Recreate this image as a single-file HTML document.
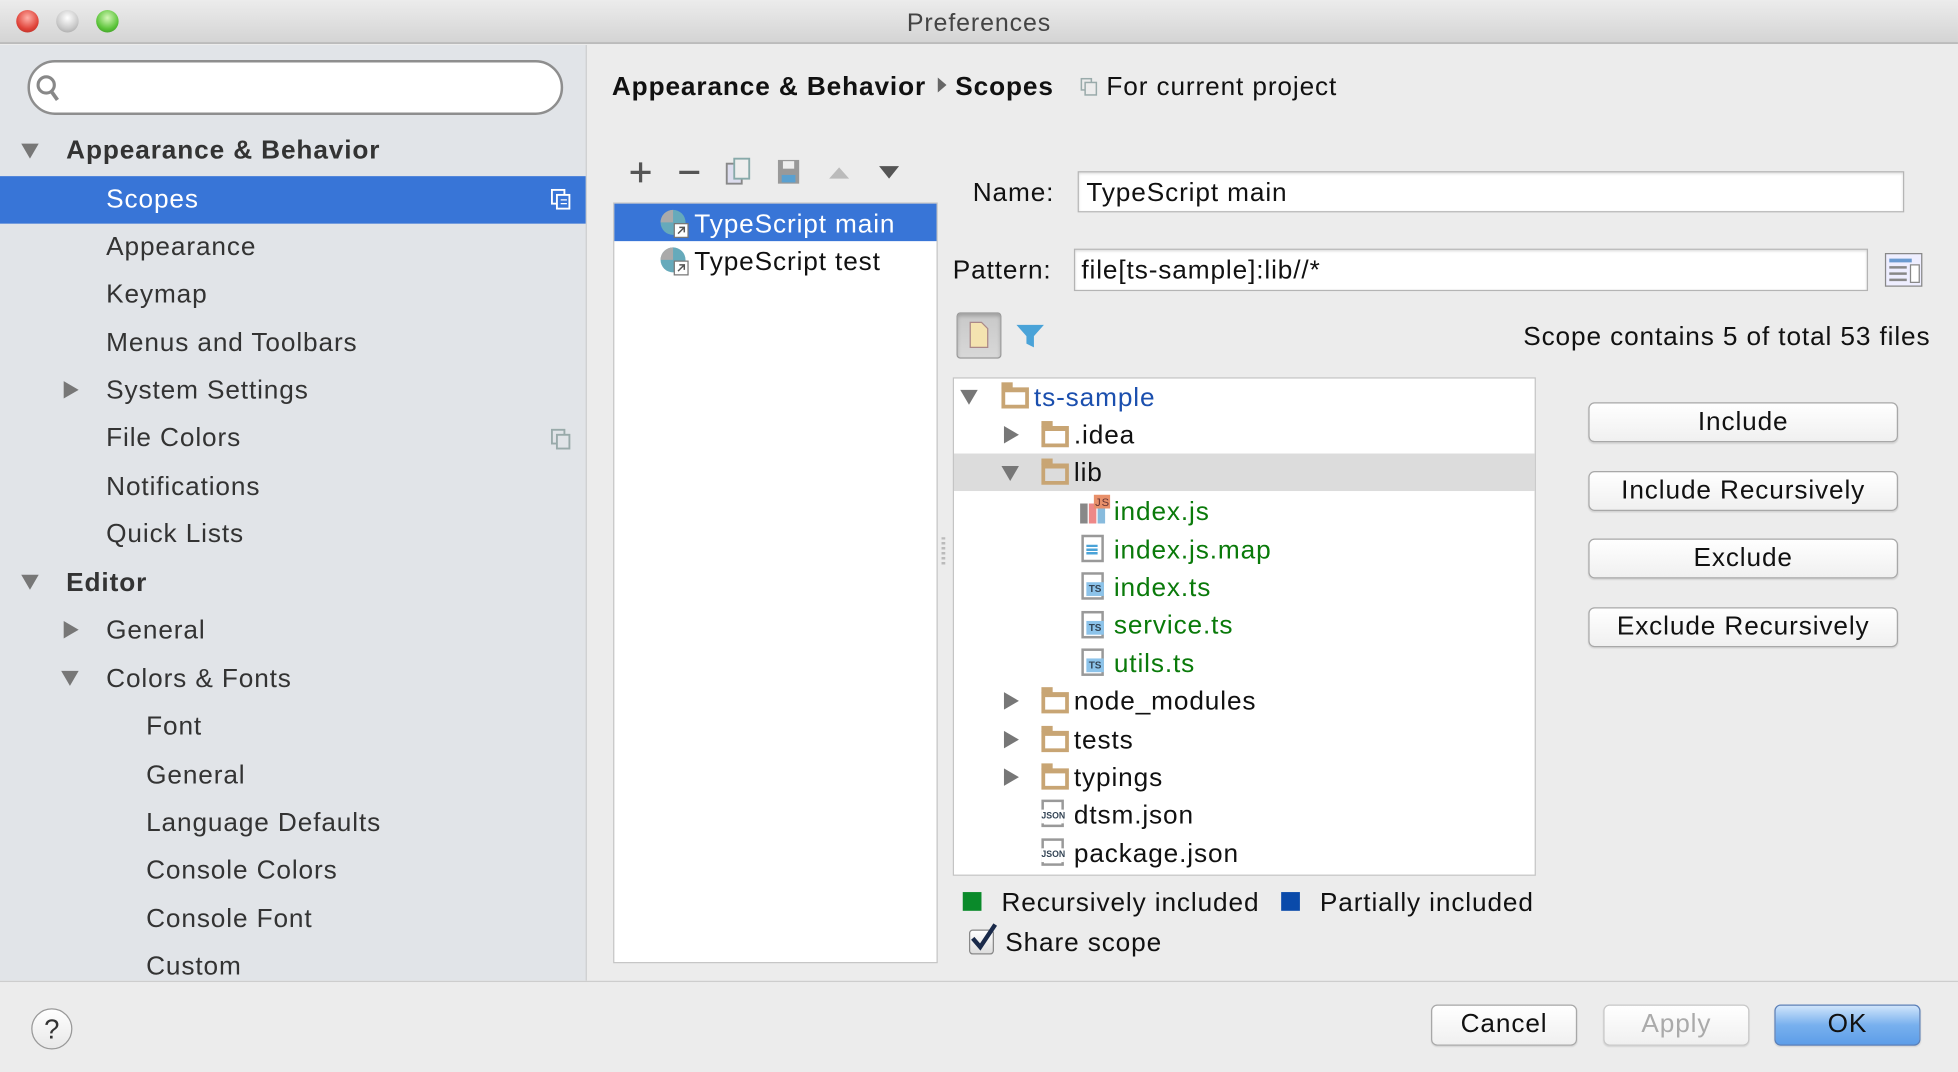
<!DOCTYPE html>
<html><head><meta charset="utf-8"><style>
*{margin:0;padding:0;box-sizing:border-box}
html,body{width:1958px;height:1072px;overflow:hidden;background:#ececec}
#w{position:absolute;left:0;top:0;width:1568px;height:858px;transform:scale(1.2487,1.2494);transform-origin:0 0;font-family:"Liberation Sans",sans-serif;font-size:21px;color:#111;letter-spacing:0.7px}
.a{position:absolute;white-space:nowrap}
.t{position:absolute;line-height:24px;transform:translateY(-11px);white-space:nowrap}
.tri{position:absolute;width:0;height:0}
.dn{border-left:7px solid transparent;border-right:7px solid transparent;border-top:12px solid #777}
.rt{border-top:7px solid transparent;border-bottom:7px solid transparent;border-left:12px solid #777}
.fold{position:absolute;width:22px;height:17px;border:3px solid #c8a574;border-top-width:4px}
.fold:before{content:"";position:absolute;left:-3px;top:-8px;width:9px;height:5px;background:#c8a574}
.file{position:absolute;width:18px;height:22px;border:2px solid #999;background:#fff}
.ts{position:absolute;left:2px;top:6px;width:14px;height:11px;background:#8cc3ea;font-size:8px;line-height:11px;color:#345;font-weight:bold;text-align:center;letter-spacing:0}
.btn{position:absolute;height:32px;border:1px solid #a8a8a8;border-radius:5px;background:linear-gradient(#fff,#f0f0f0);text-align:center;line-height:30px;font-size:21px;box-shadow:0 1px 1px rgba(0,0,0,.1)}
.inp{position:absolute;background:#fff;border:1px solid #b4b4b4;box-shadow:inset 0 1px 2px rgba(0,0,0,.15)}
</style></head><body><div id="w">
<div class="a" style="left:0;top:0;width:1568px;height:35px;background:linear-gradient(#ececec,#d4d4d4);border-bottom:1px solid #a9a9a9"></div>
<div class="a" style="left:13px;top:8px;width:18px;height:18px;border-radius:50%;background:radial-gradient(circle at 50% 35%,#ffb0a8,#e0443a 60%,#a8261e);"></div>
<div class="a" style="left:45px;top:8px;width:18px;height:18px;border-radius:50%;background:radial-gradient(circle at 50% 35%,#fff,#c8c8c8 60%,#999)"></div>
<div class="a" style="left:77px;top:8px;width:18px;height:18px;border-radius:50%;background:radial-gradient(circle at 50% 35%,#d4f7b8,#5cc43a 60%,#2e8a1c)"></div>
<div class="t" style="left:0;width:1568px;text-align:center;top:18px;font-size:20px;color:#444">Preferences</div>
<div class="a" style="left:0;top:36px;width:470px;height:749px;background:#e1e4e8;border-right:1px solid #cfcfcf"></div>
<div class="a" style="left:22px;top:48px;width:429px;height:44px;border-radius:22px;background:#fff;border:2px solid #8e8e8e"></div>
<svg class="a" style="left:28px;top:59px" width="22" height="24"><circle cx="9" cy="9" r="6.5" fill="none" stroke="#888" stroke-width="2.5"/><line x1="13" y1="14" x2="18" y2="21" stroke="#888" stroke-width="3"/></svg>
<div class="a" style="left:0;top:141px;width:469px;height:38px;background:#3875d7"></div>
<div class="tri dn" style="left:17px;top:115px"></div>
<div class="t" style="left:53px;top:120px;font-weight:bold;color:#333">Appearance &amp; Behavior</div>
<div class="t" style="left:85px;top:159px;color:#fff">Scopes</div>
<svg class="a" style="left:441px;top:151px" width="16" height="17"><rect x="1" y="1" width="10" height="11" fill="none" stroke="#fff" stroke-width="1.5"/><rect x="5" y="5" width="10" height="11" fill="#3875d7" stroke="#fff" stroke-width="1.5"/><line x1="8" y1="9" x2="13" y2="9" stroke="#fff"/><line x1="8" y1="12" x2="13" y2="12" stroke="#fff"/></svg>
<div class="t" style="left:85px;top:197px;color:#333">Appearance</div>
<div class="t" style="left:85px;top:235px;color:#333">Keymap</div>
<div class="t" style="left:85px;top:274px;color:#333">Menus and Toolbars</div>
<div class="tri rt" style="left:51px;top:305px"></div>
<div class="t" style="left:85px;top:312px;color:#333">System Settings</div>
<div class="t" style="left:85px;top:350px;color:#333">File Colors</div>
<svg class="a" style="left:441px;top:343px" width="16" height="17"><rect x="1" y="1" width="10" height="11" fill="none" stroke="#9aa" stroke-width="1.5"/><rect x="5" y="5" width="10" height="11" fill="#e1e4e8" stroke="#9aa" stroke-width="1.5"/></svg>
<div class="t" style="left:85px;top:389px;color:#333">Notifications</div>
<div class="t" style="left:85px;top:427px;color:#333">Quick Lists</div>
<div class="tri dn" style="left:17px;top:460px"></div>
<div class="t" style="left:53px;top:466px;font-weight:bold;color:#333">Editor</div>
<div class="tri rt" style="left:51px;top:497px"></div>
<div class="t" style="left:85px;top:504px;color:#333">General</div>
<div class="tri dn" style="left:49px;top:537px"></div>
<div class="t" style="left:85px;top:543px;color:#333">Colors &amp; Fonts</div>
<div class="t" style="left:117px;top:581px;color:#333">Font</div>
<div class="t" style="left:117px;top:620px;color:#333">General</div>
<div class="t" style="left:117px;top:658px;color:#333">Language Defaults</div>
<div class="t" style="left:117px;top:696px;color:#333">Console Colors</div>
<div class="t" style="left:117px;top:735px;color:#333">Console Font</div>
<div class="t" style="left:117px;top:773px;color:#333">Custom</div>
<div class="t" style="left:490px;top:69px;font-weight:bold">Appearance &amp; Behavior</div>
<div class="tri" style="left:751px;top:62px;border-top:6px solid transparent;border-bottom:6px solid transparent;border-left:7px solid #666"></div>
<div class="t" style="left:765px;top:69px;font-weight:bold">Scopes</div>
<svg class="a" style="left:865px;top:62px" width="14" height="15"><rect x="1" y="1" width="8" height="9" fill="none" stroke="#9aa" stroke-width="1.2"/><rect x="4" y="4" width="9" height="10" fill="#ececec" stroke="#9aa" stroke-width="1.2"/></svg>
<div class="t" style="left:886px;top:69px">For current project</div>
<svg class="a" style="left:500px;top:125px" width="230" height="26">
<path d="M5 13h16M13 5v16" stroke="#555" stroke-width="2.6"/>
<path d="M44 13h16" stroke="#555" stroke-width="2.6"/>
<rect x="82" y="6" width="12" height="16" fill="#dde" stroke="#888" stroke-width="1.5"/><rect x="88" y="2" width="12" height="16" fill="#eee" stroke="#8aa" stroke-width="1.5"/>
<rect x="123" y="3" width="17" height="19" fill="#999"/><rect x="127" y="4" width="9" height="6" fill="#eee"/><rect x="126" y="15" width="11" height="6" fill="#5aa0d0"/>
<path d="M164 18l8-9 8 9z" fill="#bbb"/>
<path d="M204 8l8 10 8-10z" fill="#555"/>
</svg>
<div class="a" style="left:491px;top:162px;width:260px;height:609px;background:#fff;border:1px solid #c4c4c4"></div>
<div class="a" style="left:492px;top:163px;width:258px;height:30px;background:#3875d7"></div>
<svg class="a" style="left:527px;top:166px" width="26" height="26"><circle cx="12" cy="12" r="10" fill="#6ab"/><path d="M12 12V2A10 10 0 0 0 2 12z" fill="#aaa"/><rect x="13" y="13" width="11" height="11" fill="#fff" stroke="#777"/><path d="M16 21l5-5M17 16h4v4" stroke="#555" stroke-width="1.2" fill="none"/></svg>
<div class="t" style="left:556px;top:179px;color:#fff">TypeScript main</div>
<svg class="a" style="left:527px;top:196px" width="26" height="26"><circle cx="12" cy="12" r="10" fill="#6ab"/><path d="M12 12V2A10 10 0 0 0 2 12z" fill="#aaa"/><rect x="13" y="13" width="11" height="11" fill="#fff" stroke="#777"/><path d="M16 21l5-5M17 16h4v4" stroke="#555" stroke-width="1.2" fill="none"/></svg>
<div class="t" style="left:556px;top:209px">TypeScript test</div>
<div class="a" style="left:754px;top:430px;width:3px;height:22px;background:repeating-linear-gradient(#bbb 0 2px,transparent 2px 4px)"></div>
<div class="t" style="left:779px;top:154px">Name:</div>
<div class="inp" style="left:863px;top:137px;width:662px;height:33px"></div>
<div class="t" style="left:870px;top:154px">TypeScript main</div>
<div class="t" style="left:763px;top:216px">Pattern:</div>
<div class="inp" style="left:860px;top:199px;width:636px;height:34px"></div>
<div class="t" style="left:866px;top:216px">file[ts-sample]:lib//*</div>
<svg class="a" style="left:1509px;top:201px" width="32" height="30"><rect x="1" y="2" width="29" height="26" fill="#eef" stroke="#888"/><rect x="4" y="6" width="18" height="3" fill="#6a9ad0"/><rect x="4" y="12" width="14" height="2" fill="#888"/><rect x="4" y="17" width="14" height="2" fill="#888"/><rect x="4" y="22" width="14" height="2" fill="#888"/><rect x="21" y="11" width="7" height="14" fill="#fff" stroke="#888"/></svg>
<div class="a" style="left:766px;top:250px;width:36px;height:37px;background:linear-gradient(#c8c8c8,#d8d8d8);border:1px solid #999;border-radius:3px;box-shadow:inset 0 2px 3px rgba(0,0,0,.2)"></div>
<svg class="a" style="left:775px;top:257px" width="18" height="22"><path d="M2 1h9l5 5v15H2z" fill="#f4e3b0" stroke="#a88"/></svg>
<svg class="a" style="left:813px;top:258px" width="24" height="22"><path d="M1 2h22l-8 9v9l-6-3v-6z" fill="#4aa3d8"/></svg>
<div class="t" style="left:1100px;width:446px;text-align:right;top:269px">Scope contains 5 of total 53 files</div>
<div class="a" style="left:763px;top:302px;width:467px;height:399px;background:#fff;border:1px solid #c4c4c4"></div>
<div class="a" style="left:764px;top:363px;width:465px;height:30px;background:#dcdcdc"></div>
<div class="tri dn" style="left:769px;top:312px"></div>
<div class="fold" style="left:802px;top:310px"></div>
<div class="t" style="left:828px;top:318px;color:#1b4fae">ts-sample</div>
<div class="tri rt" style="left:804px;top:341px"></div>
<div class="fold" style="left:834px;top:341px"></div>
<div class="t" style="left:860px;top:348px">.idea</div>
<div class="tri dn" style="left:802px;top:373px"></div>
<div class="fold" style="left:834px;top:371px"></div>
<div class="t" style="left:860px;top:378px">lib</div>
<svg class="a" style="left:864px;top:395px" width="26" height="26"><rect x="1" y="8" width="6" height="16" fill="#888"/><rect x="8" y="8" width="6" height="16" fill="#e88"/><rect x="15" y="8" width="6" height="16" fill="#8bd"/><rect x="12" y="1" width="13" height="11" fill="#e8906a"/><text x="13" y="10" font-size="9" font-family="Liberation Sans" fill="#633">JS</text></svg>
<div class="t" style="left:892px;top:409px;color:#0a7a0a">index.js</div>
<div class="file" style="left:866px;top:428px"></div>
<div class="a" style="left:870px;top:436px;width:9px;height:8px;background:repeating-linear-gradient(#4aa3d8 0 2px,transparent 2px 3px)"></div>
<div class="t" style="left:892px;top:440px;color:#0a7a0a">index.js.map</div>
<div class="file" style="left:866px;top:458px"><div class="ts">TS</div></div>
<div class="t" style="left:892px;top:470px;color:#0a7a0a">index.ts</div>
<div class="file" style="left:866px;top:489px"><div class="ts">TS</div></div>
<div class="t" style="left:892px;top:500px;color:#0a7a0a">service.ts</div>
<div class="file" style="left:866px;top:519px"><div class="ts">TS</div></div>
<div class="t" style="left:892px;top:531px;color:#0a7a0a">utils.ts</div>
<div class="tri rt" style="left:804px;top:554px"></div>
<div class="fold" style="left:834px;top:554px"></div>
<div class="t" style="left:860px;top:561px">node_modules</div>
<div class="tri rt" style="left:804px;top:585px"></div>
<div class="fold" style="left:834px;top:585px"></div>
<div class="t" style="left:860px;top:592px">tests</div>
<div class="tri rt" style="left:804px;top:615px"></div>
<div class="fold" style="left:834px;top:615px"></div>
<div class="t" style="left:860px;top:622px">typings</div>
<div class="file" style="left:834px;top:640px"><div class="ts" style="background:#fff;font-size:7px;left:-2px;width:18px">JSON</div></div>
<div class="t" style="left:860px;top:652px">dtsm.json</div>
<div class="file" style="left:834px;top:671px"><div class="ts" style="background:#fff;font-size:7px;left:-2px;width:18px">JSON</div></div>
<div class="t" style="left:860px;top:683px">package.json</div>
<div class="btn" style="left:1272px;top:322px;width:248px">Include</div>
<div class="btn" style="left:1272px;top:377px;width:248px">Include Recursively</div>
<div class="btn" style="left:1272px;top:431px;width:248px">Exclude</div>
<div class="btn" style="left:1272px;top:486px;width:248px">Exclude Recursively</div>
<div class="a" style="left:771px;top:714px;width:15px;height:15px;background:#0a8a2a"></div>
<div class="t" style="left:802px;top:722px">Recursively included</div>
<div class="a" style="left:1026px;top:714px;width:15px;height:15px;background:#0a4aaa"></div>
<div class="t" style="left:1057px;top:722px">Partially included</div>
<div class="a" style="left:776px;top:744px;width:20px;height:20px;border:1px solid #888;border-radius:3px;background:linear-gradient(#fff,#ddd)"></div>
<svg class="a" style="left:774px;top:737px" width="26" height="26"><path d="M5 14l6 7L23 3" fill="none" stroke="#1a2a4a" stroke-width="3.5"/></svg>
<div class="t" style="left:805px;top:754px">Share scope</div>
<div class="a" style="left:0;top:785px;width:1568px;height:73px;background:#ececec;border-top:1px solid #cdcdcd"></div>
<div class="a" style="left:25px;top:807px;width:33px;height:33px;border-radius:50%;border:1px solid #999;background:linear-gradient(#fff,#e8e8e8);text-align:center;line-height:31px;font-size:22px;color:#333;letter-spacing:0">?</div>
<div class="btn" style="left:1146px;top:804px;width:117px;height:33px">Cancel</div>
<div class="btn" style="left:1284px;top:804px;width:117px;height:33px;color:#aaa;border-color:#c8c8c8">Apply</div>
<div class="btn" style="left:1421px;top:804px;width:117px;height:33px;background:linear-gradient(#cfe4fb,#78b0ee 50%,#5d9de8);border-color:#5a7fb8">OK</div>
</div></body></html>
